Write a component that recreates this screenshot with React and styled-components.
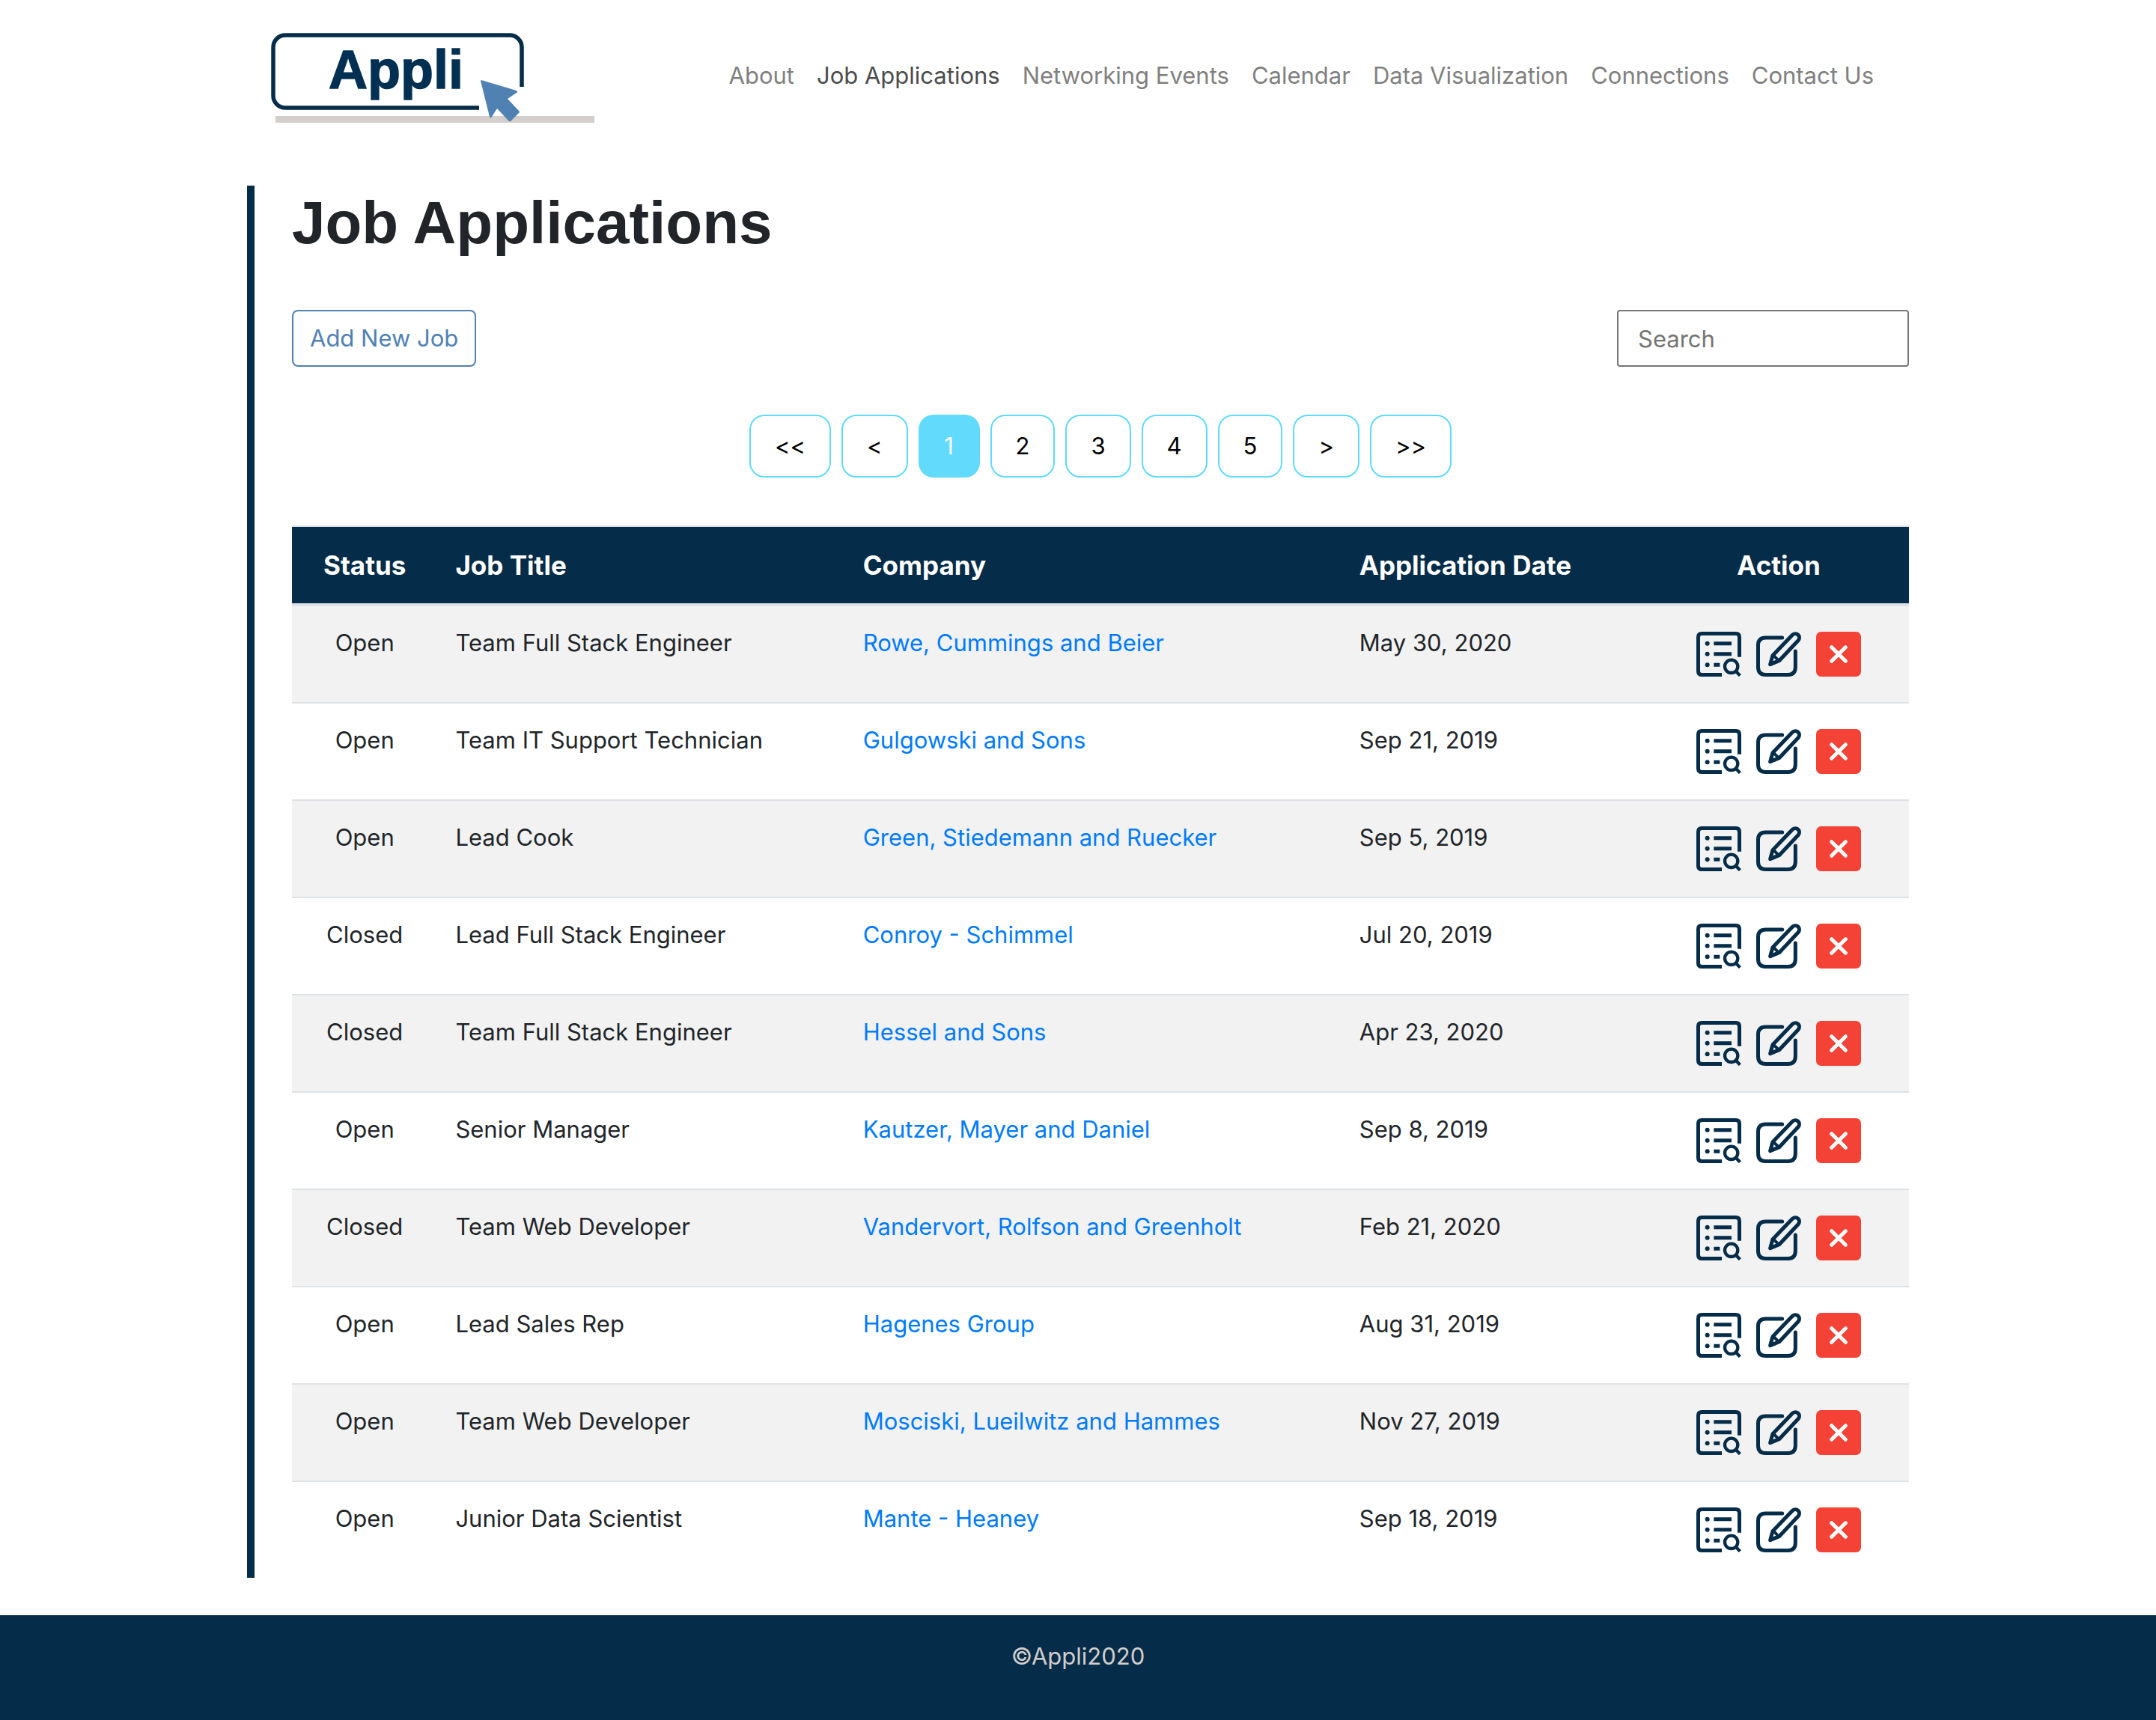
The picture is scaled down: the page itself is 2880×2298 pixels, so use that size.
import React, { useState } from "react";
import styled, { createGlobalStyle } from "styled-components";

const navy = "#052c48";
const steel = "#4f81b3";
const sky = "#61dafb";
const line = "#dee2e6";
const ui = `Inter, "Liberation Sans", sans-serif`;
const display = `"Liberation Sans", Arial, sans-serif`;

const GlobalStyle = createGlobalStyle`
  *, *::before, *::after { box-sizing: border-box; }
  body {
    margin: 0;
    background: #fff;
    color: #212529;
    font-family: ${ui};
    font-size: 31px;
    line-height: 48px;
  }
`;

const Page = styled.div`
  min-height: 100vh;
  display: flex;
  flex-direction: column;
`;

const Container = styled.div`
  width: 100%;
  max-width: 2280px;
  margin: 0 auto;
  padding: 0 30px;
`;

const Header = styled.header`
  padding: 36px 0 76px;
`;

const HeaderRow = styled(Container)`
  display: flex;
  align-items: flex-start;
  justify-content: space-between;
  padding: 0 62px 0 60px;
`;

const LogoLink = styled.a`
  display: block;
  flex: none;
`;

const LogoArt = styled.svg`
  display: block;
  width: 440px;
  height: 136px;
`;

const Nav = styled.nav`
  display: flex;
  flex-wrap: wrap;
  padding-top: 41px;
`;

const NavLink = styled.a`
  padding: 0 15px;
  color: ${(p) => (p.$active ? "#4c4c4c" : "#808080")};
  text-decoration: none;
`;

const Main = styled.main`
  padding-left: 50px;
  border-left: 10px solid ${navy};
`;

const Title = styled.h1`
  margin: 0 0 66px;
  font: bold 80px/100px ${display};
`;

const Toolbar = styled.div`
  display: flex;
  justify-content: space-between;
  align-items: center;
`;

const AddButton = styled.button`
  height: 76px;
  padding: 0 22px;
  border: 2px solid ${steel};
  border-radius: 8px;
  background: transparent;
  color: ${steel};
  font: inherit;
  cursor: pointer;
`;

const SearchInput = styled.input`
  width: 390px;
  height: 76px;
  padding: 0 26px;
  border: 2px solid #767676;
  border-radius: 4px;
  background: #fff;
  color: #212529;
  font: inherit;
  &::placeholder { color: #757575; opacity: 1; }
`;

const Pagination = styled.nav`
  display: flex;
  justify-content: center;
  gap: 14px;
  margin: 64px 0;
`;

const PageButton = styled.button`
  height: 84px;
  min-width: 82px;
  padding: 0 32px;
  border: ${(p) => (p.$active ? "0" : `2px solid ${sky}`)};
  border-radius: 20px;
  background: ${(p) => (p.$active ? sky : "transparent")};
  color: ${(p) => (p.$active ? "#fff" : "#000")};
  font: inherit;
  cursor: pointer;
`;

const Table = styled.table`
  width: 100%;
  table-layout: fixed;
  border-spacing: 0;
`;

const Col = styled.col`
  width: ${(p) => p.$width};
`;

const HeadCell = styled.th`
  padding: 24px;
  border-top: 2px solid ${line};
  border-bottom: 4px solid ${line};
  background: ${navy};
  color: #fff;
  font-size: 35px;
  font-weight: 700;
  line-height: 54px;
  text-align: ${(p) => (p.$center ? "center" : "left")};
`;

const Cell = styled.td`
  padding: 25px 24px;
  vertical-align: top;
  text-align: ${(p) => (p.$center ? "center" : "left")};
`;

const ActionCell = styled(Cell)`
  padding: 34px 0;
`;

const Row = styled.tr`
  &:nth-child(odd) { background: #f2f2f2; }
  & + & > td { border-top: 2px solid ${line}; }
`;

const CompanyLink = styled.a`
  color: #007bff;
  text-decoration: none;
`;

const Actions = styled.div`
  display: flex;
  justify-content: center;
  gap: 20px;
`;

const IconButton = styled.button`
  display: block;
  padding: 0;
  border: 0;
  background: none;
  cursor: pointer;
`;

const Icon = styled.svg`
  display: block;
  width: 60px;
  height: 60px;
`;

const Footer = styled.footer`
  flex: 1;
  margin-top: 50px;
  padding: 31px 0 60px;
  background: ${navy};
  color: #d3cecd;
  text-align: center;
`;

const Logo = () => (
  <LogoArt viewBox="0 0 440 136" role="img" aria-label="Appli">
    <rect x="8" y="119" width="426" height="9" fill="#d3cecb" />
    <path
      d="M280 108H21A16 16 0 0 1 5 92V27A16 16 0 0 1 21 11H321A16 16 0 0 1 337 27V80"
      fill="none"
      stroke={navy}
      strokeWidth="5.5"
    />
    <text
      x="79"
      y="82"
      fontFamily="Liberation Sans, Arial, sans-serif"
      fontWeight="bold"
      fontSize="72"
      fill="#023052"
      stroke="#023052"
      strokeWidth="1.5"
    >
      Appli
    </text>
    <path
      d="M283 71L330 85Q332 87 330 88L318 96L333 112Q335 114 333 115L322 126Q321 127 319 125L304 109L297 120Q295 123 294 120L282 72Z"
      fill="#5081b3"
    />
  </LogoArt>
);

const DetailsIcon = () => (
  <Icon viewBox="0 0 180 180" fill="none" stroke={navy} strokeWidth="15" aria-hidden="true">
    <path d="M102 172.500H22Q7.500 172.500 7.500 158V22Q7.500 7.500 22 7.500H158Q172.500 7.500 172.500 22V101" />
    <path d="M70 47H141M70 89H141M70 133H94" />
    <circle cx="140" cy="139" r="26" strokeWidth="13" />
    <path d="M157 157L175 176" strokeWidth="13" />
    <g fill={navy} stroke="none">
      <circle cx="44" cy="47" r="9" />
      <circle cx="44" cy="89" r="9" />
      <circle cx="44" cy="133" r="9" />
    </g>
  </Icon>
);

const EditIcon = () => (
  <Icon
    viewBox="0 0 180 180"
    fill="none"
    stroke={navy}
    strokeWidth="15"
    strokeLinecap="round"
    strokeLinejoin="round"
    aria-hidden="true"
  >
    <path d="M104 24H38Q7.500 24 7.500 54V142Q7.500 172.500 38 172.500H127Q157 172.500 157 142V78" />
    <path d="M56 131L66 95L145 13A15.500 15.500 0 0 1 168 35L92 116Z" strokeWidth="15" />
    <path d="M69 95L90 116" strokeWidth="12" />
  </Icon>
);

const DeleteIcon = () => (
  <Icon viewBox="0 0 180 180" aria-hidden="true">
    <rect width="180" height="180" rx="20" fill="#f44336" />
    <path d="M62 62L118 118M118 62L62 118" stroke="#fff" strokeWidth="15" strokeLinecap="round" />
  </Icon>
);

const links = [
  "About",
  "Job Applications",
  "Networking Events",
  "Calendar",
  "Data Visualization",
  "Connections",
  "Contact Us",
];

const pages = ["<<", "<", "1", "2", "3", "4", "5", ">", ">>"];

const jobs = [
  ["Open", "Team Full Stack Engineer", "Rowe, Cummings and Beier", "May 30, 2020"],
  ["Open", "Team IT Support Technician", "Gulgowski and Sons", "Sep 21, 2019"],
  ["Open", "Lead Cook", "Green, Stiedemann and Ruecker", "Sep 5, 2019"],
  ["Closed", "Lead Full Stack Engineer", "Conroy - Schimmel", "Jul 20, 2019"],
  ["Closed", "Team Full Stack Engineer", "Hessel and Sons", "Apr 23, 2020"],
  ["Open", "Senior Manager", "Kautzer, Mayer and Daniel", "Sep 8, 2019"],
  ["Closed", "Team Web Developer", "Vandervort, Rolfson and Greenholt", "Feb 21, 2020"],
  ["Open", "Lead Sales Rep", "Hagenes Group", "Aug 31, 2019"],
  ["Open", "Team Web Developer", "Mosciski, Lueilwitz and Hammes", "Nov 27, 2019"],
  ["Open", "Junior Data Scientist", "Mante - Heaney", "Sep 18, 2019"],
];

export default function App() {
  const [query, setQuery] = useState("");

  return (
    <Page>
      <GlobalStyle />
      <Header>
        <HeaderRow>
          <LogoLink href="#home">
            <Logo />
          </LogoLink>
          <Nav>
            {links.map((label) => (
              <NavLink key={label} href="#" $active={label === "Job Applications"}>
                {label}
              </NavLink>
            ))}
          </Nav>
        </HeaderRow>
      </Header>
      <Container>
        <Main>
          <Title>Job Applications</Title>
          <Toolbar>
            <AddButton type="button">Add New Job</AddButton>
            <SearchInput
              type="text"
              aria-label="Search"
              placeholder="Search"
              value={query}
              onChange={(e) => setQuery(e.target.value)}
            />
          </Toolbar>
          <Pagination>
            {pages.map((label) => (
              <PageButton key={label} type="button" $active={label === "1"}>
                {label}
              </PageButton>
            ))}
          </Pagination>
          <Table>
            <colgroup>
              <Col $width="9%" />
              <Col $width="25.2%" />
              <Col $width="30.7%" />
              <Col $width="19%" />
              <Col $width="16.1%" />
            </colgroup>
            <thead>
              <tr>
                <HeadCell $center>Status</HeadCell>
                <HeadCell>Job Title</HeadCell>
                <HeadCell>Company</HeadCell>
                <HeadCell>Application Date</HeadCell>
                <HeadCell $center>Action</HeadCell>
              </tr>
            </thead>
            <tbody>
              {jobs.map(([status, title, company, date]) => (
                <Row key={company}>
                  <Cell $center>{status}</Cell>
                  <Cell>{title}</Cell>
                  <Cell>
                    <CompanyLink href="#">{company}</CompanyLink>
                  </Cell>
                  <Cell>{date}</Cell>
                  <ActionCell>
                    <Actions>
                      <IconButton type="button" aria-label="View details">
                        <DetailsIcon />
                      </IconButton>
                      <IconButton type="button" aria-label="Edit">
                        <EditIcon />
                      </IconButton>
                      <IconButton type="button" aria-label="Delete">
                        <DeleteIcon />
                      </IconButton>
                    </Actions>
                  </ActionCell>
                </Row>
              ))}
            </tbody>
          </Table>
        </Main>
      </Container>
      <Footer>©Appli2020</Footer>
    </Page>
  );
}
